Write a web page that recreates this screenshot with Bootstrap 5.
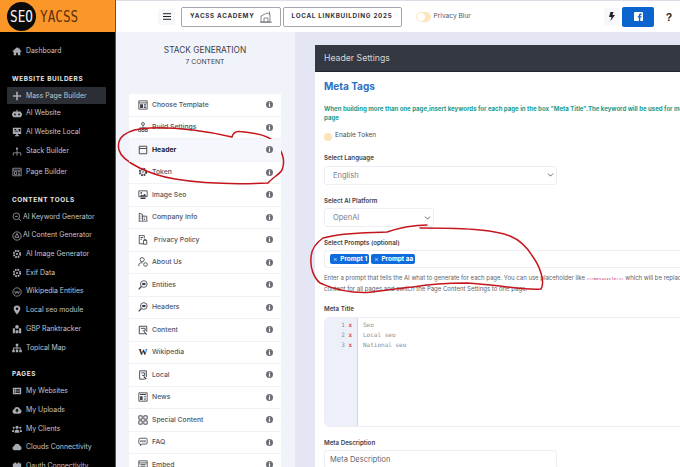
<!DOCTYPE html>
<html lang="en">
<head>
  <meta charset="UTF-8" />
  <meta name="viewport" content="width=device-width, initial-scale=1.0" />
  <title>SEO YACSS | Stack Generation</title>
  <link href="https://cdn.jsdelivr.net/npm/bootstrap@5.3.3/dist/css/bootstrap.min.css" rel="stylesheet" />
  <style>
    html, body { height: 467px; overflow: hidden; }
    body { font-family: Inter, "Liberation Sans", sans-serif; font-size: 7px; color: #3a3d48; background: #fff; }
    .app-wrap { position: relative; width: 680px; height: 467px; overflow: hidden; }

    /* left menu */
    .side { width: 116px; flex: none; height: 467px; background: #000; color: #c9cbd2; border-right: 1px solid #555; }
    .logo-bar { height: 32px; background: #fb9729; gap: 4px; padding-left: 7px; overflow: hidden; }
    .logo-disc { width: 29px; height: 29px; border-radius: 50%; background: #0a0a0a; color: #f4f4f4; font: 12.7px "DejaVu Sans Mono", monospace; }
    .logo-disc span, .logo-name { display: block; transform: scaleY(1.2); }
    .logo-name { color: #5f3009; font: 12.7px "DejaVu Sans Mono", monospace; }
    .side-menu { padding: 9.5px 0 0 0; }
    .side-label { color: #e8e8ec; font-size: 6.4px; font-weight: 700; letter-spacing: .6px; padding-left: 12px; height: 16px; line-height: 16px; }
    .side-label.thin-row { height: 15px; line-height: 15px; }
    .side-link { height: 18.7px; padding-left: 12px; gap: 4px; font-size: 6.9px; color: #c2c4cb; white-space: nowrap; }
    .side-link svg { width: 10px; height: 10px; flex: none; color: #a9abb2; }
    .side-link.on { height: 17px; margin: 0 9px 0 7px; padding-left: 5px; background: #2b2e35; border-radius: 1px; }
    .side-link.tight { gap: 1px; }
    .side-link.wide-row { height: 20px; }
    .side-link.wider-row { height: 21px; }
    .side-gap { height: 10px; }
    .side-gap.big { height: 11px; }
    .side-chev { margin-left: auto; margin-right: 13px; color: #888; font-size: 6px; }

    /* top bar */
    .top-bar { height: 32px; background: #fff; border-top: 1px solid #dcdde6; flex: none; }
    .burger { width: 17px; height: 16px; margin-left: 42px; background: #f6f7fb; border-radius: 2px; }
    .burger svg { width: 8px; height: 7px; }
    .top-btn { height: 20px; margin-left: 2px; gap: 5px; border: 1px solid #a4a6ab; border-radius: 2px; background: #fff; color: #33353c; font-size: 6.3px; font-weight: 700; letter-spacing: .7px; white-space: nowrap; justify-content: center; }
    .top-btn.first-btn { width: 99.5px; margin-left: 6px; }
    .top-btn.second-btn { width: 119px; }
    .top-btn svg { width: 12px; height: 12px; }
    .blur-toggle { width: 15px; height: 10px; margin-left: 14px; border-radius: 5px; background: #fde6bd; position: relative; }
    .blur-toggle::before { content: ""; position: absolute; left: 1px; top: 1px; width: 8px; height: 8px; border-radius: 50%; background: #fff; }
    .blur-text { margin-left: 3px; font-size: 6.6px; color: #55575f; }
    .bolt-btn { width: 16px; height: 17px; margin-left: auto; background: #f8f8fb; }
    .bolt-btn svg { width: 6px; height: 9px; }
    .fb-btn { width: 32px; height: 20px; border-radius: 2px; background: #0b63ce; margin-left: 2px; }
    .fb-btn svg { width: 9px; height: 9px; }
    .help-btn { width: 22px; margin-left: 4px; font: 700 10.5px "Liberation Sans", sans-serif; color: #1b1c20; text-align: center; }

    /* step column */
    .step-col { width: 179px; flex: none; background: #f1f3fa; padding: 0 14px 0 13px; }
    .step-title { padding-top: 13px; height: 62px; text-align: center; color: #3c3e46; font-size: 8.3px; line-height: 11px; }
    .step-title div + div { font-size: 6.8px; }
    .step-list { border-radius: 0; }
    .step-list .list-group-item { height: 22.5px; padding: 0 8px 0 9px; gap: 4px; border: 0; border-bottom: 1px solid #f1f2f7; background: #fff; color: #52545e; font-size: 6.8px; font-weight: 500; white-space: nowrap; }
    .step-list .list-group-item.active { background: #f6f7fc; color: #17181c; font-weight: 700; margin: 0; }
    .step-ico { width: 10px; height: 10px; flex: none; color: #3d3f46; }
    .wiki-w { width: 10px; flex: none; text-align: center; font: 700 9px "Liberation Serif", serif; color: #26272c; }
    .info-dot { width: 7px; height: 7px; margin-left: auto; flex: none; color: #6c6e76; }

    /* settings */
    .work-col { flex: 1; min-width: 0; background: #e4e6f3; padding: 13px 0 0 20px; overflow: hidden; }
    .set-card { width: 520px; border: 0; border-radius: 0; background: #fff; }
    .set-head { height: 27px; padding: 1px 0 0 9px; background: #343840; color: #d3d5da; font-size: 8.7px; border-bottom: 1px solid #23262c; border-radius: 0; }
    .set-body { padding: 8px 9px 0 9px; }
    .meta-head { color: #2a6fc5; font-size: 10px; font-weight: 700; line-height: 12px; margin-bottom: 11.5px; }
    .notice-text { color: #1c9b8b; font-size: 6.07px; font-weight: 700; line-height: 9.6px; white-space: nowrap; margin-bottom: 8.6px; }
    .token-row { gap: 3px; height: 10px; margin-bottom: 13.2px; color: #4c4e57; font-size: 6.5px; }
    .token-dot { width: 8px; height: 8px; margin-top: 2px; border-radius: 50%; background: #fde3b8; flex: none; }
    .field-label { font-size: 6.2px; font-weight: 600; color: #3e4049; line-height: 8px; margin-bottom: 3.5px; }
    .set-body .form-select, .set-body .form-control { height: 19px; min-height: 0; padding: 0 8px; font-size: 7.5px; line-height: 17px; color: #7b7d85; border: 1px solid #eceef3; border-radius: 3px; background-color: #fff; }
    .set-body .form-select { background-size: 7px 6px; background-position: right 2px center; }
    .set-body .form-control { padding-left: 5px; }
    .wide-field { width: 233px; }
    .short-field { width: 110px; }
    .field-gap { margin-bottom: 11.7px; }
    .chip-box { height: 18px; padding: 3px 5px; gap: 2px; border: 1px solid #eceef3; border-radius: 3px; margin-bottom: 4.5px; }
    .chip-tag { height: 10px; padding: 0 2px 0 3px; gap: 3px; background: #0d6bdc; color: #fff; border-radius: 2px; font-size: 6.4px; font-weight: 700; white-space: nowrap; }
    .chip-tag span { font-weight: 400; color: #cfe0f6; }
    .help-text { font-size: 6px; line-height: 9.4px; color: #5d5f68; white-space: nowrap; margin-bottom: 11.4px; }
    .help-text code { font-size: 4.1px; color: #c2185b; font-family: "Liberation Mono", monospace; }
    .line-box { height: 110px; border: 1px solid #eceef3; border-radius: 5px; overflow: hidden; margin-bottom: 12px; }
    .line-nums { width: 33px; background: #eef0f9; border-right: 1px solid #cfd4ea; padding-top: 2px; flex: none; font: 6px/10.1px "DejaVu Sans Mono", monospace; text-align: right; color: #8a8c95; }
    .line-nums span { color: #e0484d; font-weight: 700; margin: 0 5px 0 3.5px; }
    .line-text { padding: 2px 0 0 5px; font: 6px/10.1px "DejaVu Sans Mono", monospace; color: #8d8f96; }

    .pen-marks { position: absolute; left: 0; top: 0; width: 680px; height: 467px; pointer-events: none; }
  </style>
</head>
<body>

<svg width="0" height="0" class="d-none">
  <symbol id="i-home" viewBox="0 0 12 12"><path fill="currentColor" d="M6 1.500 .5 6.400l.7.7L2 6.400V11h3V8h2v3h3V6.400l.8.7.7-.7-2-1.800V2H9v1.500z"/></symbol>
  <symbol id="i-plus" viewBox="0 0 12 12"><path fill="currentColor" d="M5 1h2v4h4v2H7v4H5V7H1V5h4z"/></symbol>
  <symbol id="i-robot" viewBox="0 0 12 12"><path fill="currentColor" d="M5.400 1h1.200v2H10a1 1 0 0 1 1 1v1h1v3h-1v1a1 1 0 0 1-1 1H2a1 1 0 0 1-1-1V8H0V5h1V4a1 1 0 0 1 1-1h3.400zM3.500 5.500a1 1 0 1 0 0 2 1 1 0 0 0 0-2m5 0a1 1 0 1 0 0 2 1 1 0 0 0 0-2"/></symbol>
  <symbol id="i-screen" viewBox="0 0 12 12"><path fill="currentColor" d="M1 1h10v7.500H7v1.500h1.500v1h-5v-1H5V8.500H1zm2 1.500v1h2v-1zm0 2v1h4v-1zm5-2v3h2v-3z"/></symbol>
  <symbol id="i-tree" viewBox="0 0 12 12"><path fill="none" stroke="currentColor" stroke-width=".9" d="M6 1v6M1.500 10.500V7h9v3.500M6 7v3.500"/><circle cx="6" cy="1.800" r="1.200" fill="currentColor"/></symbol>
  <symbol id="i-page" viewBox="0 0 12 12"><path fill="none" stroke="currentColor" stroke-width=".9" d="M1 1.500h10v9H1zM1 3.800h10M3 5.500h2.500v3.500H3zM7 5.500h2.500M7 7.300h2.500M7 9h2.500"/></symbol>
  <symbol id="i-seek" viewBox="0 0 12 12"><circle cx="5.200" cy="5.200" r="4" fill="none" stroke="currentColor" stroke-width=".9"/><path fill="none" stroke="currentColor" stroke-width="1" d="m8 8 3 3M3.500 5.200h3.400"/></symbol>
  <symbol id="i-ring" viewBox="0 0 12 12"><circle cx="6" cy="6" r="5" fill="none" stroke="currentColor" stroke-width="1"/><path fill="none" stroke="currentColor" stroke-width="1" d="M6 3 8.500 7.500h-5z"/></symbol>
  <symbol id="i-gpt" viewBox="0 0 12 12"><circle cx="6" cy="6" r="3.800" fill="none" stroke="currentColor" stroke-width="2.400" stroke-dasharray="2 1"/><circle cx="6" cy="6" r="1.300" fill="currentColor"/></symbol>
  <symbol id="i-wiki" viewBox="0 0 12 12"><circle cx="6" cy="6" r="5" fill="none" stroke="currentColor" stroke-width=".9"/><path fill="none" stroke="currentColor" stroke-width=".9" d="m3 4.500 1.500 3.500L6 5l1.500 3L9 4.500"/></symbol>
  <symbol id="i-pin" viewBox="0 0 12 12"><path fill="currentColor" fill-rule="evenodd" d="M6 .5a4 4 0 0 1 4 4c0 2.600-4 7-4 7s-4-4.400-4-7a4 4 0 0 1 4-4m0 2.500a1.500 1.500 0 1 0 0 3 1.500 1.500 0 0 0 0-3"/></symbol>
  <symbol id="i-map" viewBox="0 0 12 12"><path fill="currentColor" d="M1 5h2.500v6H1zM8.500 5H11v6H8.500zM4.300 7.500h3.400V11H4.300z"/><circle cx="6" cy="3.500" r="2.200" fill="currentColor"/></symbol>
  <symbol id="i-hier" viewBox="0 0 12 12"><path fill="currentColor" d="M4.500 .8h3v3h-1V5.500H10.500V8h1.200v3H8.700V8h1V6.500H6.500V8h1v3h-3V8h1V6.500H2.300V8h1v3H.3V8h1V5.500h4.200V3.800h-1z"/></symbol>
  <symbol id="i-list" viewBox="0 0 12 12"><path fill="currentColor" fill-rule="evenodd" d="M1 2h10v8H1zm1.500 1.500v1h1v-1zm2 0v1h5v-1zm-2 2v1h1v-1zm2 0v1h5v-1zm-2 2v1h1v-1zm2 0v1h5v-1z"/></symbol>
  <symbol id="i-cloudup" viewBox="0 0 12 12"><path fill="currentColor" fill-rule="evenodd" d="M3 10.500a2.700 2.700 0 0 1-.4-5.300 3.600 3.600 0 0 1 6.900-.3A2.900 2.900 0 0 1 9 10.500zM6 4.200 3.800 6.800h1.500v2h1.400v-2h1.500z"/></symbol>
  <symbol id="i-users" viewBox="0 0 12 12"><circle cx="6" cy="4" r="1.800" fill="currentColor"/><circle cx="2" cy="4.500" r="1.300" fill="currentColor"/><circle cx="10" cy="4.500" r="1.300" fill="currentColor"/><path fill="currentColor" d="M3 10.500C3 8 4 6.500 6 6.500s3 1.500 3 4zM0 9.500C0 7.500.8 6.500 2.200 6.500L2.500 9.500zM12 9.500c0-2-.8-3-2.200-3L9.500 9.500z"/></symbol>
  <symbol id="i-cloud" viewBox="0 0 12 12"><path fill="currentColor" d="M3 10a2.700 2.700 0 0 1-.4-5.300 3.600 3.600 0 0 1 6.900-.3A2.900 2.900 0 0 1 9 10z"/></symbol>
  <symbol id="i-plug" viewBox="0 0 12 12"><path fill="currentColor" d="M1 3h10v6H1zM3 1.800h2V3H3zM7 1.800h2V3H7z"/></symbol>

  <symbol id="s-template" viewBox="0 0 12 12"><path fill="none" stroke="currentColor" stroke-width="1" d="M1 1h10v10H1zM1 3.500h10"/><path fill="currentColor" d="M2.500 5h3.500v4.500H2.500zM7 5h2.500v1.500H7zM7 7.800h2.500v1.700H7z"/></symbol>
  <symbol id="s-build" viewBox="0 0 12 12"><circle cx="6" cy="2.300" r="1.700" fill="none" stroke="currentColor"/><path fill="none" stroke="currentColor" stroke-width=".9" d="M6 4v3M2 9V7h8v2"/><path fill="none" stroke="currentColor" stroke-width=".9" d="M.7 9h2.600v2.400H.7zM4.700 9h2.600v2.400H4.700zM8.700 9h2.600v2.400H8.700z"/></symbol>
  <symbol id="s-window" viewBox="0 0 12 12"><path fill="none" stroke="currentColor" stroke-width="1.100" d="M1.500 1.500h9v9h-9zM1.500 4.200h9"/></symbol>
  <symbol id="s-token" viewBox="0 0 12 12"><circle cx="6" cy="6" r="3.700" fill="none" stroke="currentColor" stroke-width="2.600" stroke-dasharray="2 .9"/><circle cx="6" cy="6" r="1" fill="currentColor"/></symbol>
  <symbol id="s-image" viewBox="0 0 12 12"><path fill="none" stroke="currentColor" d="M1 1h10v7H1z"/><circle cx="4" cy="3.500" r="1" fill="currentColor"/><path fill="currentColor" d="m2 7.500 2.500-2 1.500 1 2-2 2 3zM3 9h6v1.800H3z"/></symbol>
  <symbol id="s-company" viewBox="0 0 12 12"><path fill="none" stroke="currentColor" d="M1.500 10.500V1.500l4 1.500v7.500M5.500 5h5v5.500"/><path fill="currentColor" d="M.5 10.500h11v1H.5zM7 6.500h1.200v1H7zM7 8.500h1.200v1H7zM3 4.500h1.200v1H3zM3 7h1.200v1H3z"/></symbol>
  <symbol id="s-privacy" viewBox="0 0 12 12"><path fill="none" stroke="currentColor" d="M7 10.500H1.500v-10h6V4M3 3h3M3 5h2"/><path fill="none" stroke="currentColor" d="M6.500 6.500h4v4.500h-4zM7.500 6.500V5.300h2v1.200"/></symbol>
  <symbol id="s-about" viewBox="0 0 12 12"><circle cx="5" cy="3.200" r="2.500" fill="none" stroke="currentColor"/><path fill="none" stroke="currentColor" d="M1 11V9.500c0-1.500 1-2.500 2.500-2.500h2"/><circle cx="9" cy="9" r="2.200" fill="none" stroke="currentColor"/></symbol>
  <symbol id="s-chat" viewBox="0 0 12 12"><circle cx="7" cy="4.800" r="4" fill="none" stroke="currentColor"/><path fill="none" stroke="currentColor" stroke-width="1.400" d="M4 7.800 .8 11.200"/><path fill="currentColor" d="M5 3.500h4v2.600H5z"/></symbol>
  <symbol id="s-content" viewBox="0 0 12 12"><path fill="none" stroke="currentColor" stroke-width="1.100" d="M8 10.500H1.500v-9h9v6.500M3.500 4h5v3h-3"/><path fill="currentColor" d="m7.500 7.500 3.500 3.500-1.200.8L7.500 9.500z"/></symbol>
  <symbol id="s-local" viewBox="0 0 12 12"><path fill="none" stroke="currentColor" stroke-width="1.100" d="M8 11H2V1h8v7.500M4 3.500h4v3H5"/><path fill="currentColor" d="m7 7 3.500 3.500-1.200.9L7 9z"/></symbol>
  <symbol id="s-news" viewBox="0 0 12 12"><path fill="none" stroke="currentColor" d="M1 1h10v10H1z"/><path fill="currentColor" d="M2.500 2.500h7v1.200h-7zM2.500 5h3v4.500h-3z"/><path fill="none" stroke="currentColor" stroke-width=".8" d="M7 5.300h2.500M7 7.300h2.500M7 9.200h2.500"/></symbol>
  <symbol id="s-special" viewBox="0 0 12 12"><path fill="none" stroke="currentColor" stroke-width="1.100" d="M1 1h4v4H1zM7 1h4v4H7zM1 7h4v4H1zM7 7h4v4H7z"/></symbol>
  <symbol id="s-faq" viewBox="0 0 12 12"><path fill="none" stroke="currentColor" d="M2.500 1.500h7a1.500 1.500 0 0 1 1.500 1.500v4a1.500 1.500 0 0 1-1.500 1.500H5L3 10.500V8.500h-.5A1.500 1.500 0 0 1 1 7V3a1.500 1.500 0 0 1 1.500-1.500z"/><path fill="currentColor" d="M3 3.800h1.300v2.600H3zM5.300 3.800h1.300v2.600H5.300zM7.700 3.800H9v2.600H7.700z"/></symbol>
  <symbol id="s-embed" viewBox="0 0 12 12"><path fill="none" stroke="currentColor" d="M1 1h10v10H1zM1 3.500h10M3 5.500h6M3 7.500h6"/></symbol>
  <symbol id="s-info" viewBox="0 0 12 12"><circle cx="6" cy="6" r="6" fill="currentColor"/><path fill="#fff" d="M5 2.300h2v1.800H5zM5 5.200h2v4.500H5z"/></symbol>
</svg>

<div class="app-wrap d-flex">

  <nav class="side">
    <div class="logo-bar d-flex align-items-center">
      <div class="logo-disc d-flex align-items-center justify-content-center"><span>SEO</span></div>
      <div class="logo-name">YACSS</div>
    </div>
    <div class="side-menu">
      <div class="side-link d-flex align-items-center"><svg><use href="#i-home"/></svg>Dashboard</div>
      <div class="side-gap big"></div>
      <div class="side-label">WEBSITE BUILDERS</div>
      <div class="side-link on d-flex align-items-center"><svg><use href="#i-plus"/></svg>Mass Page Builder</div>
      <div class="side-link d-flex align-items-center"><svg><use href="#i-robot"/></svg>AI Website</div>
      <div class="side-link d-flex align-items-center"><svg><use href="#i-screen"/></svg>AI Website Local</div>
      <div class="side-link wide-row d-flex align-items-center"><svg><use href="#i-tree"/></svg>Stack Builder</div>
      <div class="side-link wider-row d-flex align-items-center"><svg><use href="#i-page"/></svg>Page Builder</div>
      <div class="side-gap"></div>
      <div class="side-label thin-row">CONTENT TOOLS</div>
      <div class="side-link tight d-flex align-items-center"><svg><use href="#i-seek"/></svg>AI Keyword Generator</div>
      <div class="side-link tight d-flex align-items-center"><svg><use href="#i-ring"/></svg>AI Content Generator</div>
      <div class="side-link d-flex align-items-center"><svg><use href="#i-gpt"/></svg>AI Image Generator</div>
      <div class="side-link d-flex align-items-center"><svg><use href="#i-gpt"/></svg>Exif Data</div>
      <div class="side-link d-flex align-items-center"><svg><use href="#i-wiki"/></svg>Wikipedia Entities</div>
      <div class="side-link d-flex align-items-center"><svg><use href="#i-pin"/></svg>Local seo module</div>
      <div class="side-link d-flex align-items-center"><svg><use href="#i-map"/></svg>GBP Ranktracker</div>
      <div class="side-link d-flex align-items-center"><svg><use href="#i-hier"/></svg>Topical Map</div>
      <div class="side-gap"></div>
      <div class="side-label thin-row">PAGES</div>
      <div class="side-link d-flex align-items-center"><svg><use href="#i-list"/></svg>My Websites</div>
      <div class="side-link d-flex align-items-center"><svg><use href="#i-cloudup"/></svg>My Uploads</div>
      <div class="side-link d-flex align-items-center"><svg><use href="#i-users"/></svg>My Clients</div>
      <div class="side-link d-flex align-items-center"><svg><use href="#i-cloud"/></svg>Clouds Connectivity</div>
      <div class="side-link d-flex align-items-center"><svg><use href="#i-plug"/></svg>Oauth Connectivity<span class="side-chev">&#8964;</span></div>
    </div>
  </nav>

  <div class="d-flex flex-column flex-grow-1" style="min-width:0">
    <header class="top-bar d-flex align-items-center">
      <div class="burger d-flex align-items-center justify-content-center">
        <svg viewBox="0 0 8 7"><path fill="none" stroke="#222" d="M0 .7h8M0 3.500h8M0 6.300h8"/></svg>
      </div>
      <div class="top-btn first-btn d-flex align-items-center">YACSS ACADEMY
        <svg viewBox="0 0 12 12"><path fill="none" stroke="#55575f" stroke-width=".7" d="M1 11V5l6-3 3 1.500V11zM0 11.200h12M4 11V7h4v4M9.500 .5v3"/></svg>
      </div>
      <div class="top-btn second-btn d-flex align-items-center">LOCAL LINKBUILDING 2025</div>
      <div class="blur-toggle"></div>
      <div class="blur-text">Privacy Blur</div>
      <div class="bolt-btn d-flex align-items-center justify-content-center">
        <svg viewBox="0 0 6 9"><path fill="#222" d="M1.500 0h3L3.500 3H6L1.500 9l1-4H0z"/></svg>
      </div>
      <div class="fb-btn d-flex align-items-center justify-content-center">
        <svg viewBox="0 0 10 10"><path fill="#fff" fill-rule="evenodd" d="M1 0h8a1 1 0 0 1 1 1v8a1 1 0 0 1-1 1H7V6.200h1.300L8.500 4.700H7V3.900c0-.5.200-.8.800-.8h.8V1.800C8.300 1.700 7.900 1.700 7.400 1.700 6.200 1.700 5.400 2.400 5.400 3.700v1H4.100v1.500h1.300V10H1a1 1 0 0 1-1-1V1a1 1 0 0 1 1-1"/></svg>
      </div>
      <div class="help-btn">?</div>
    </header>

    <div class="d-flex flex-grow-1" style="min-height:0">
      <aside class="step-col">
        <div class="step-title">
          <div>STACK GENERATION</div>
          <div>7 CONTENT</div>
        </div>
        <ul class="list-group step-list">
          <li class="list-group-item d-flex align-items-center"><svg class="step-ico"><use href="#s-template"/></svg>Choose Template<svg class="info-dot"><use href="#s-info"/></svg></li>
          <li class="list-group-item d-flex align-items-center"><svg class="step-ico"><use href="#s-build"/></svg>Build Settings<svg class="info-dot"><use href="#s-info"/></svg></li>
          <li class="list-group-item active d-flex align-items-center"><svg class="step-ico"><use href="#s-window"/></svg>Header<svg class="info-dot"><use href="#s-info"/></svg></li>
          <li class="list-group-item d-flex align-items-center"><svg class="step-ico"><use href="#s-token"/></svg>Token<svg class="info-dot"><use href="#s-info"/></svg></li>
          <li class="list-group-item d-flex align-items-center"><svg class="step-ico"><use href="#s-image"/></svg>Image Seo<svg class="info-dot"><use href="#s-info"/></svg></li>
          <li class="list-group-item d-flex align-items-center"><svg class="step-ico"><use href="#s-company"/></svg>Company Info<svg class="info-dot"><use href="#s-info"/></svg></li>
          <li class="list-group-item d-flex align-items-center"><svg class="step-ico"><use href="#s-privacy"/></svg>&nbsp;Privacy Policy<svg class="info-dot"><use href="#s-info"/></svg></li>
          <li class="list-group-item d-flex align-items-center"><svg class="step-ico"><use href="#s-about"/></svg>About Us<svg class="info-dot"><use href="#s-info"/></svg></li>
          <li class="list-group-item d-flex align-items-center"><svg class="step-ico"><use href="#s-chat"/></svg>Entities<svg class="info-dot"><use href="#s-info"/></svg></li>
          <li class="list-group-item d-flex align-items-center"><svg class="step-ico"><use href="#s-chat"/></svg>Headers<svg class="info-dot"><use href="#s-info"/></svg></li>
          <li class="list-group-item d-flex align-items-center"><svg class="step-ico"><use href="#s-content"/></svg>Content<svg class="info-dot"><use href="#s-info"/></svg></li>
          <li class="list-group-item d-flex align-items-center"><span class="wiki-w">W</span>Wikipedia<svg class="info-dot"><use href="#s-info"/></svg></li>
          <li class="list-group-item d-flex align-items-center"><svg class="step-ico"><use href="#s-local"/></svg>Local<svg class="info-dot"><use href="#s-info"/></svg></li>
          <li class="list-group-item d-flex align-items-center"><svg class="step-ico"><use href="#s-news"/></svg>News<svg class="info-dot"><use href="#s-info"/></svg></li>
          <li class="list-group-item d-flex align-items-center"><svg class="step-ico"><use href="#s-special"/></svg>Special Content<svg class="info-dot"><use href="#s-info"/></svg></li>
          <li class="list-group-item d-flex align-items-center"><svg class="step-ico"><use href="#s-faq"/></svg>FAQ<svg class="info-dot"><use href="#s-info"/></svg></li>
          <li class="list-group-item d-flex align-items-center"><svg class="step-ico"><use href="#s-embed"/></svg>Embed<svg class="info-dot"><use href="#s-info"/></svg></li>
        </ul>
      </aside>

      <main class="work-col">
        <div class="card set-card">
          <div class="set-head d-flex align-items-center">Header Settings</div>
          <div class="set-body">
            <div class="meta-head">Meta Tags</div>
            <p class="notice-text">When building more than one page,insert keywords for each page in the box "Meta Title".The keyword will be used for meta title of each<br />page</p>
            <div class="token-row d-flex"><span class="token-dot"></span>Enable Token</div>
            <div class="field-label">Select Language</div>
            <select class="form-select wide-field field-gap"><option>English</option></select>
            <div class="field-label">Select AI Platform</div>
            <select class="form-select short-field field-gap"><option>OpenAI</option></select>
            <div class="field-label">Select Prompts (optional)</div>
            <div class="chip-box d-flex align-items-center">
              <div class="chip-tag d-flex align-items-center"><span>&times;</span>Prompt 1</div>
              <div class="chip-tag d-flex align-items-center"><span>&times;</span>Prompt aa</div>
            </div>
            <p class="help-text">Enter a prompt that tells the AI what to generate for each page. You can use placeholder like <code>###metatitle###</code> which will be replaced with each keyword. Use the same<br />content for all pages and switch the Page Content Settings to one page.</p>
            <div class="field-label">Meta Title</div>
            <div class="line-box d-flex">
              <div class="line-nums">1<span>x</span><br />2<span>x</span><br />3<span>x</span></div>
              <div class="line-text">Seo<br />Local seo<br />National seo</div>
            </div>
            <div class="field-label">Meta Description</div>
            <input class="form-control wide-field" placeholder="Meta Description" />
          </div>
        </div>
      </main>
    </div>
  </div>

  <svg class="pen-marks" viewBox="0 0 680 467" fill="none" stroke="#c4161c" stroke-width="1.500" stroke-linecap="round" stroke-linejoin="round">
    <path d="M232 137C233 133 236 131 240 131.500C258 133 272 137 276 144C284 153 285 163 282 170C279 175 272 178 268 183C245 184 205 184 175 179C150 175 122 162 119 150C116 138 125 129 150 128C180 127 205 131 232 137Z"/>
    <path d="M427 225C420 225 405 226 387 232C370 233 345 232 323 238C316 243 311 250 311 258C310 268 314 278 320 283C335 290 350 293 367 292.500C385 291 398 288 413 287C430 284 450 283 467 283C480 284 490 285 500 286C515 288 530 290 541 289C545 283 541 268 533 257C527 247 520 240 510 236C500 232 490 231 480 230C460 228 440 228 420 228"/>
  </svg>
</div>

</body>
</html>
